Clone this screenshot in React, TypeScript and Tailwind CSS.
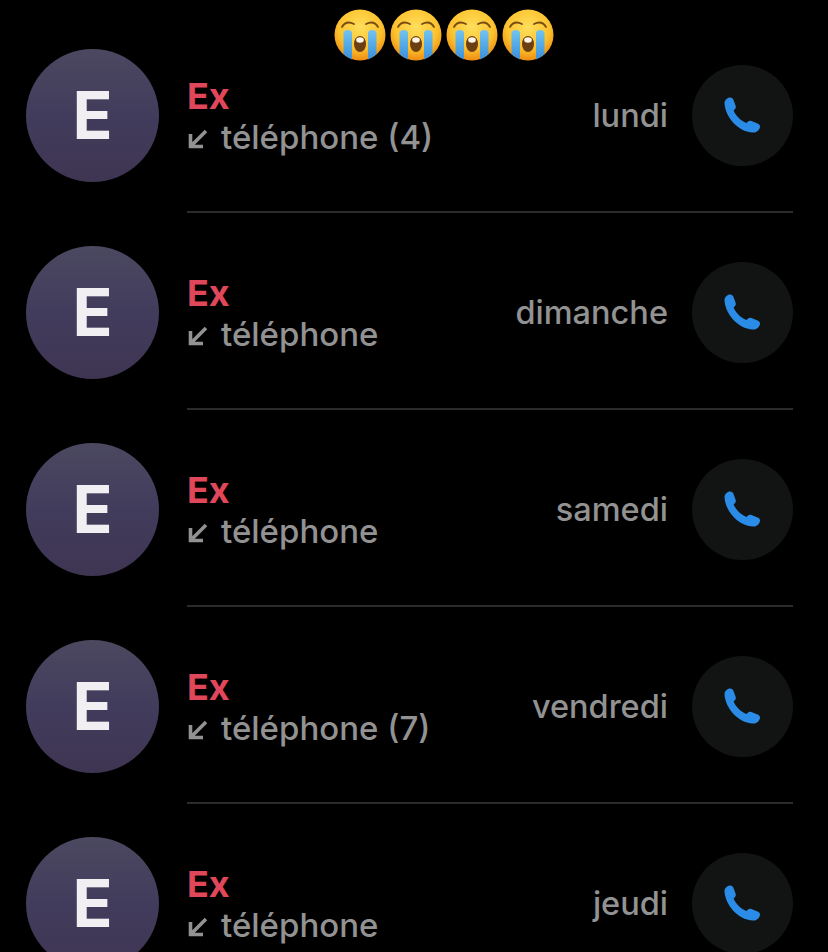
const calls = [
  { day: "lundi", count: 4 },
  { day: "dimanche" },
  { day: "samedi" },
  { day: "vendredi", count: 7 },
  { day: "jeudi" },
];

function CryingEmoji({ id }: { id: number }) {
  return (
    <svg width="52" height="52" viewBox="0 0 52 52" className="shrink-0">
      <defs>
        <radialGradient id={`face-${id}`} cx="50%" cy="35%" r="65%">
          <stop offset="0%" stopColor="#ffdf5c" />
          <stop offset="65%" stopColor="#fcc22e" />
          <stop offset="100%" stopColor="#ee8a12" />
        </radialGradient>
        <linearGradient id={`tear-${id}`} x1="0" y1="0" x2="0" y2="1">
          <stop offset="0%" stopColor="#72c4ee" />
          <stop offset="100%" stopColor="#3a90dc" />
        </linearGradient>
      </defs>
      <circle cx="26" cy="26" r="25.5" fill={`url(#face-${id})`} />
      <path d="M9.500 45 V25 Q9.500 21 13.500 21 H14.500 Q18 21 18 25 V50.500 Q13 48.500 9.500 45z" fill={`url(#tear-${id})`} />
      <path d="M42.500 45 V25 Q42.500 21 38.500 21 H37.500 Q34 21 34 25 V50.500 Q39 48.500 42.500 45z" fill={`url(#tear-${id})`} />
      <path d="M8 18 Q12 11 20 15" fill="none" stroke="#7a4a12" strokeWidth="1.8" strokeLinecap="round" />
      <path d="M44 18 Q40 11 32 15" fill="none" stroke="#7a4a12" strokeWidth="1.8" strokeLinecap="round" />
      <ellipse cx="26" cy="35" rx="6" ry="8" fill="#6b3f12" />
      <ellipse cx="26" cy="31" rx="3.800" ry="2.800" fill="#fdf6e6" />
    </svg>
  );
}

function PhoneGlyph() {
  return (
    <svg width="38" height="38" viewBox="0 0 38 38" fill="#2a8ce6" className="-ml-[2px]">
      <path d="M1.500 6 C1.500 3 4.500 0.500 7 0.500 C8.800 0.500 10 1.500 10.600 3.200 L12.600 8.800 C13.100 10.200 12.800 11.400 11.800 12.300 L10.600 13.400 C12.600 18.400 17.600 23.600 23.400 26 L24.800 24.700 C25.800 23.800 27 23.500 28.400 24 L34.600 26.400 C36.400 27.100 37.200 28.400 37 30 C36.600 33 33.400 35.800 30 35.600 C14.400 34.600 2 19.400 1.500 6 Z" />
    </svg>
  );
}

function CallRow({ day, count }: { day: string; count?: number }) {
  return (
    <div className="flex h-[197px] items-center pl-[26px] pr-[35px]">
      <div className="mt-[2px] flex h-[133px] w-[133px] shrink-0 items-center justify-center rounded-full bg-gradient-to-b from-[#4b4860] via-[#423c5c] to-[#3e3552] text-[66px] font-bold text-[#f1eff2]">
        E
      </div>
      <div className="ml-[28px] flex h-full flex-1 items-center border-b-2 border-[#2b2b2d] pt-[4px]">
        <div className="flex-1">
          <div className="pt-[2px] text-[36px] leading-[41px] font-bold text-[#e0475a]">Ex</div>
          <div className="flex items-center text-[33px] leading-[41px] font-medium text-[#929292]">
            <svg width="22" height="22" viewBox="0 0 22 22" fill="none" stroke="#929292" strokeWidth="3.600" className="mr-[12px] mt-[4px]">
              <path d="M19 3 L5 17 M3.500 6 V18.500 H16" />
            </svg>
            <span>téléphone{count ? ` (${count})` : ""}</span>
          </div>
        </div>
        <div className="mr-[24px] pt-[2px] text-[32.500px] font-medium text-[#929292]">{day}</div>
        <div className="flex h-[101px] w-[101px] items-center justify-center rounded-full bg-[#121413]">
          <PhoneGlyph />
        </div>
      </div>
    </div>
  );
}

export default function App() {
  return (
    <div className="relative h-[952px] overflow-hidden bg-black pt-[16px] font-['Inter',sans-serif]">
      <div className="absolute top-[9px] left-[334px] flex gap-[4px]">
        {[1, 2, 3, 4].map((i) => (
          <CryingEmoji key={i} id={i} />
        ))}
      </div>
      {calls.map((c) => (
        <CallRow key={c.day} day={c.day} count={c.count} />
      ))}
    </div>
  );
}
